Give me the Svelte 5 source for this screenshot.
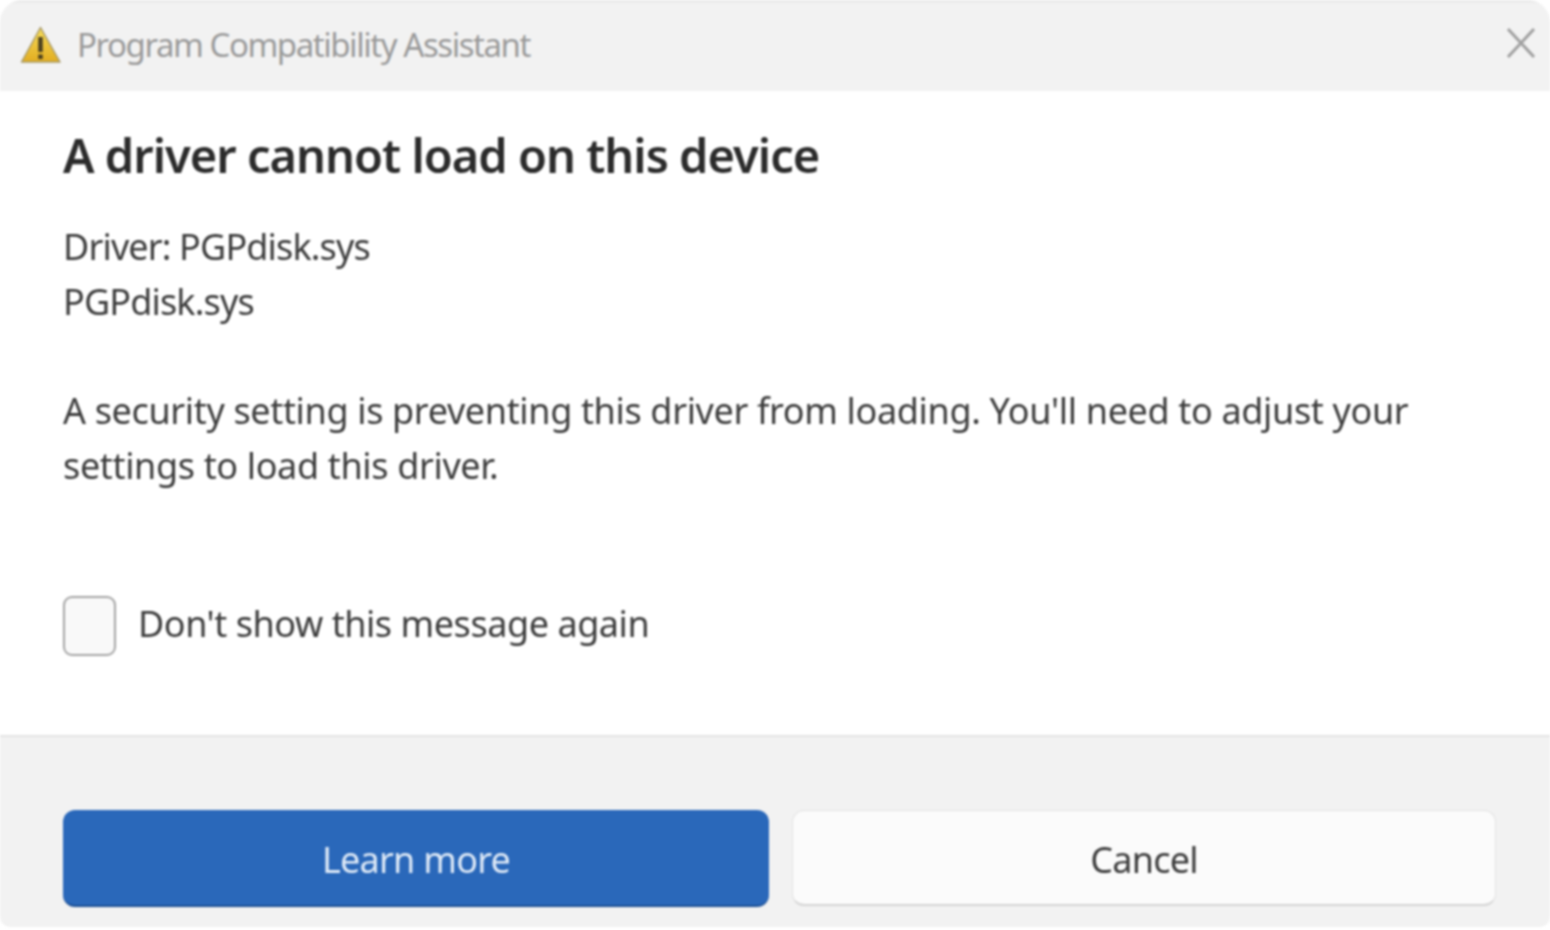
<script>
  const title = 'Program Compatibility Assistant';
</script>

<div class="page">
  <div class="window">
    <header class="titlebar">
      <svg class="warn" viewBox="0 0 42 40" width="42" height="40" aria-hidden="true">
        <defs>
          <linearGradient id="w" x1="0" y1="0" x2="0" y2="1">
            <stop offset="0" stop-color="#f6dc5a" />
            <stop offset="1" stop-color="#e2ad20" />
          </linearGradient>
        </defs>
        <path d="M20.5 2.5 L40 37 H1.5 Z" fill="url(#w)" stroke="#a89a68" stroke-width="1.5" stroke-linejoin="round" />
        <path d="M20.5 12 V27" stroke="#4a4020" stroke-width="4.5" />
        <path d="M20.5 29.5 V34" stroke="#4a4020" stroke-width="4.5" />
      </svg>
      <span class="apptitle">{title}</span>
      <svg class="close" viewBox="0 0 30 32" width="30" height="32" aria-hidden="true">
        <path d="M2 2 L28 30 M28 2 L2 30" stroke="#a0a0a0" stroke-width="3" fill="none" />
      </svg>
    </header>

    <main class="content">
      <h1>A driver cannot load on this device</h1>
      <p class="driver">Driver: PGPdisk.sys<br />PGPdisk.sys</p>
      <p class="message">A security setting is preventing this driver from loading. You'll need to adjust your<br />settings to load this driver.</p>
      <label class="check">
        <span class="box"></span>
        <span class="checktext">Don't show this message again</span>
      </label>
    </main>

    <footer class="actions">
      <button class="primary">Learn more</button>
      <button class="secondary">Cancel</button>
    </footer>
  </div>
</div>

<style>
  :global(body) {
    margin: 0;
    background: #fff;
  }
  .page {
    width: 1550px;
    height: 930px;
    overflow: hidden;
    font-family: "Noto Sans", "Open Sans", sans-serif;
    filter: blur(0.9px);
  }
  .window {
    height: 927px;
    display: flex;
    flex-direction: column;
    box-sizing: border-box;
    border-radius: 22px 22px 10px 10px;
    overflow: hidden;
    background: #fff;
  }
  .titlebar {
    height: 91px;
    flex: none;
    box-sizing: border-box;
    background: #f2f2f2;
    border-top: 3px solid #ebebeb;
    display: flex;
    align-items: center;
    padding: 0 14px 0 20px;
  }
  .warn {
    flex: none;
    margin-top: -4px;
  }
  .apptitle {
    margin-left: 15px;
    margin-top: -6px;
    font-size: 33px;
    color: #9a9a9a;
    letter-spacing: -1.45px;
    white-space: nowrap;
  }
  .close {
    margin-left: auto;
    margin-top: -8px;
  }
  .content {
    flex: 1;
    padding: 32px 0 0 63px;
    color: #3c3c3c;
    font-size: 36px;
    letter-spacing: -0.85px;
    line-height: 55px;
  }
  h1 {
    margin: 0;
    font-size: 47px;
    font-weight: 600;
    line-height: 64px;
    color: #2b2b2b;
    letter-spacing: -0.98px;
  }
  p {
    margin: 0;
    white-space: nowrap;
  }
  .driver {
    margin-top: 32px;
  }
  .message {
    margin-top: 54px;
    letter-spacing: -0.35px;
  }
  .check {
    display: flex;
    align-items: center;
    gap: 22px;
    margin-top: 100px;
  }
  .checktext {
    letter-spacing: -0.45px;
  }
  .box {
    width: 53px;
    height: 60px;
    box-sizing: border-box;
    border: 2px solid #a4a4a4;
    border-radius: 9px;
    background: #f9f9f9;
    position: relative;
    top: 3px;
  }
  .actions {
    height: 192px;
    flex: none;
    box-sizing: border-box;
    background: #f2f2f2;
    border-top: 2px solid #e4e4e4;
    display: flex;
    gap: 23px;
    padding: 73px 54px 0 63px;
    align-items: flex-start;
  }
  button {
    height: 97px;
    border-radius: 12px;
    font: inherit;
    font-size: 36px;
    letter-spacing: -0.75px;
    padding-top: 4px;
  }
  .primary {
    width: 706px;
    border: none;
    border-bottom: 2px solid #1c4f94;
    background: #2a68ba;
    color: #dfeaf7;
  }
  .secondary {
    width: 704px;
    height: 96px;
    border: 1px solid #e2e2e2;
    border-bottom: 2px solid #d4d4d4;
    background: #fbfbfb;
    color: #3c3c3c;
  }
</style>
